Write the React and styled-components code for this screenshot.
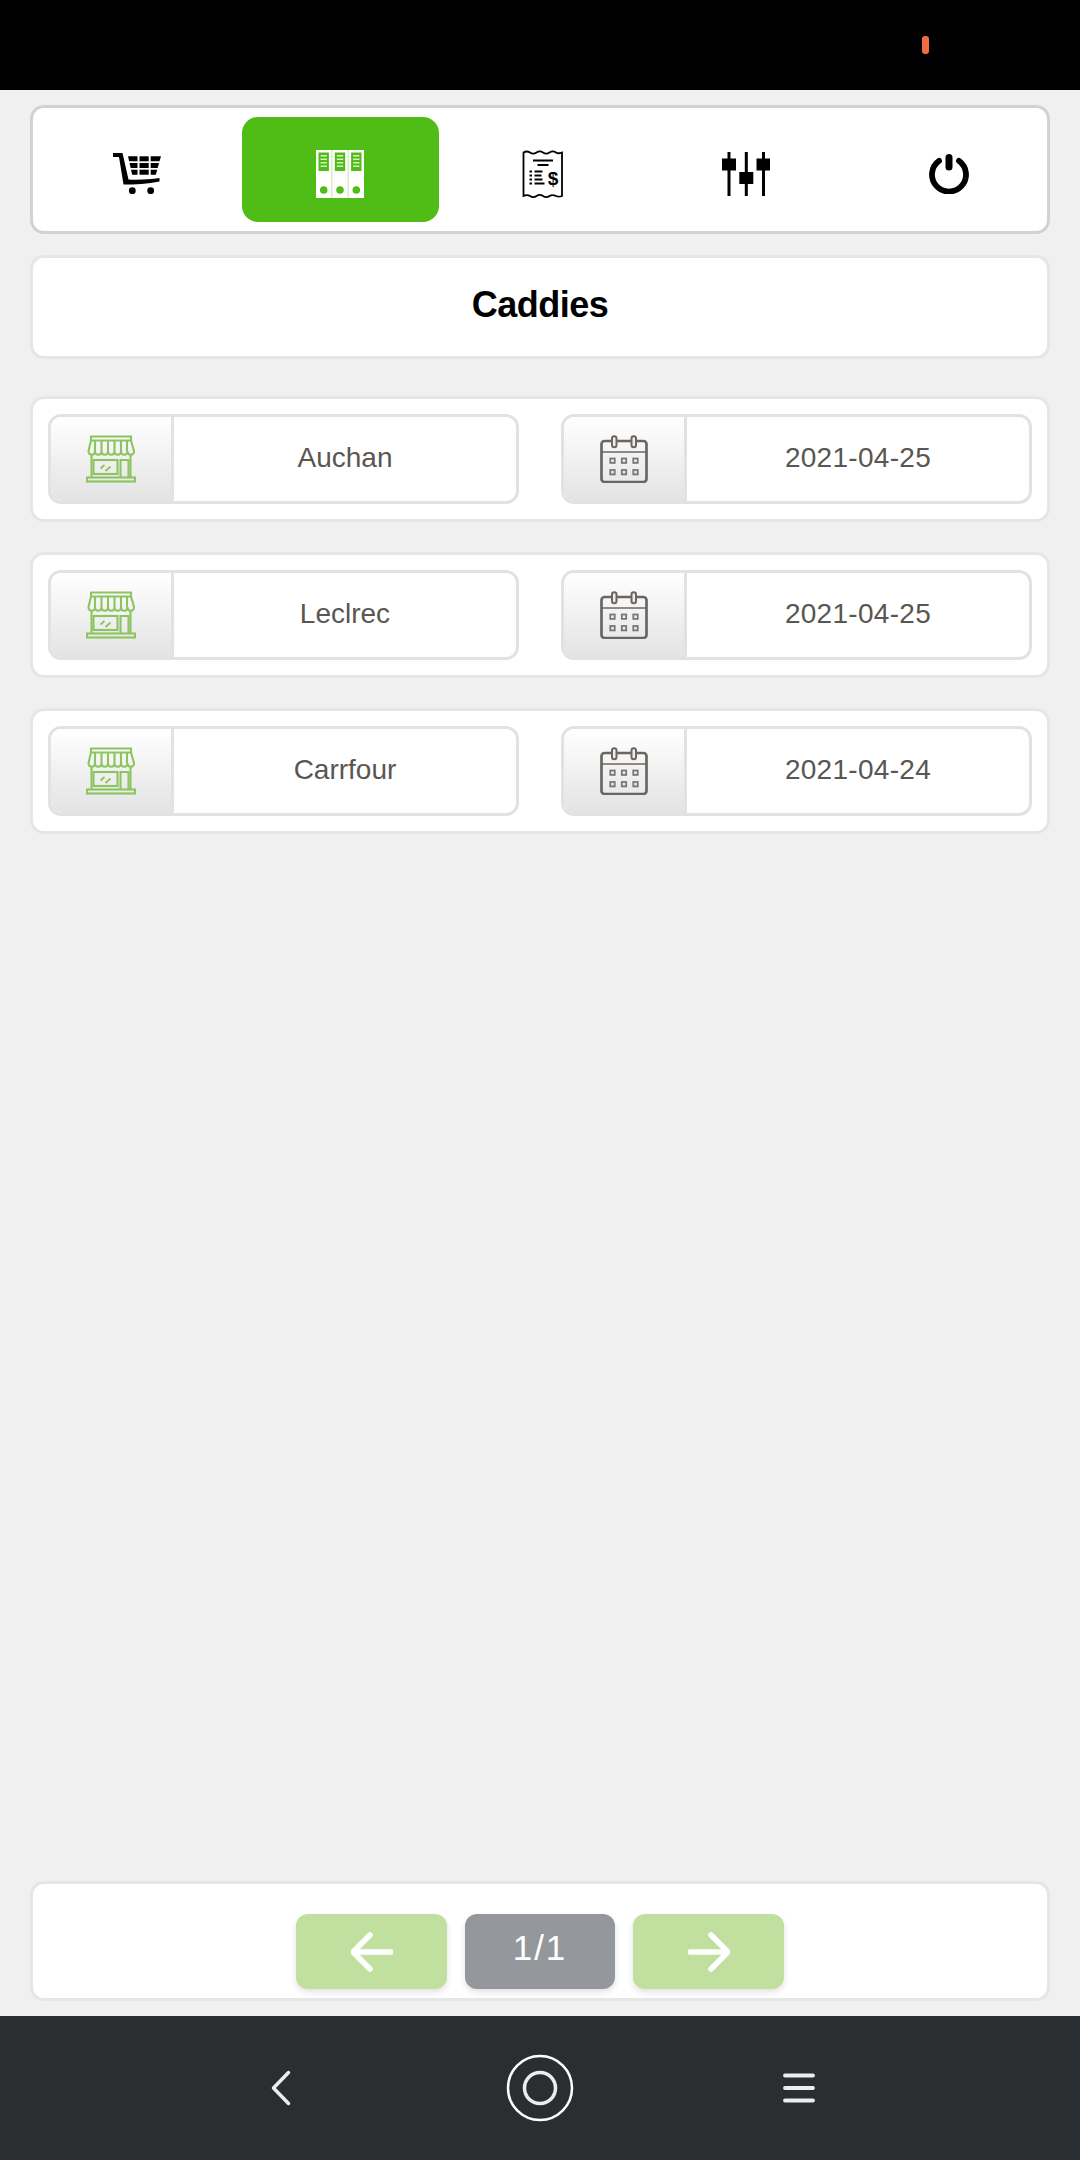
import React from 'react'
import styled, { createGlobalStyle } from 'styled-components'

const GlobalStyle = createGlobalStyle`
  html, body {
    margin: 0;
    padding: 0;
    background: #f0f0f0;
    font-family: "Liberation Sans", Arial, sans-serif;
  }
  * { box-sizing: border-box; }
`

const Page = styled.div`
  width: 1080px;
  height: 2160px;
  display: flex;
  flex-direction: column;
  background: #f0f0f0;
`

const StatusBar = styled.div`
  height: 90px;
  flex-shrink: 0;
  background: #000;
  display: flex;
  align-items: center;
  justify-content: flex-end;
  padding-right: 151px;
`

const RecordDot = styled.div`
  width: 7px;
  height: 18px;
  border-radius: 3px;
  background: #f26b43;
`

const Main = styled.main`
  flex: 1;
  display: flex;
  flex-direction: column;
  padding: 15px 30px;
`

const Card = styled.div`
  background: #fff;
  border: 3px solid #e6e6e6;
  border-radius: 14px;
`

const Toolbar = styled(Card)`
  height: 129px;
  border-color: #d2d2d2;
  padding: 9px 0 9px 3px;
  display: grid;
  grid-template-columns: repeat(5, 202.8px);
`

const ToolButton = styled.button`
  margin: 0 3px;
  padding: 9px 0 0;
  border: none;
  border-radius: 16px;
  background: ${(props) => (props.$active ? '#4fbd15' : 'transparent')};
  display: flex;
  align-items: center;
  justify-content: center;
`

const TitleCard = styled(Card)`
  height: 104px;
  margin-top: 21px;
  padding-bottom: 5px;
  display: flex;
  align-items: center;
  justify-content: center;
`

const Title = styled.h1`
  margin: 0;
  font-size: 36px;
  font-weight: 700;
  letter-spacing: -0.5px;
  color: #000;
`

const List = styled.div`
  display: flex;
  flex-direction: column;
  gap: 30px;
  margin-top: 37px;
`

const Row = styled(Card)`
  padding: 15px;
  display: grid;
  grid-template-columns: 1fr 1fr;
  gap: 42px;
`

const Field = styled.div`
  height: 90px;
  display: flex;
  background: #fff;
  border: 3px solid #e2e2e2;
  border-radius: 13px;
  overflow: hidden;
`

const FieldIcon = styled.div`
  width: 123px;
  flex-shrink: 0;
  display: flex;
  align-items: center;
  justify-content: center;
  border-right: 3px solid #e2e2e2;
  background: linear-gradient(to bottom, #ffffff, #e3e3e3);
`

const FieldValue = styled.div`
  flex: 1;
  display: flex;
  align-items: center;
  justify-content: center;
  padding-bottom: 2px;
  font-size: 28px;
  letter-spacing: ${(props) => (props.$date ? '0.3px' : '0')};
  color: #5a5651;
`

const Spacer = styled.div`
  flex: 1;
`

const Pager = styled(Card)`
  height: 120px;
  padding: 30px 0 9px;
  display: flex;
  justify-content: center;
  gap: 18px;
`

const PagerButton = styled.button`
  width: 151px;
  height: 75px;
  padding: 0;
  border: none;
  border-radius: 12px;
  background: #c1df9e;
  box-shadow: 0 3px 6px rgba(0, 0, 0, 0.12);
  display: flex;
  align-items: center;
  justify-content: center;
`

const PageNumber = styled(PagerButton).attrs({ as: 'div' })`
  width: 150px;
  padding-bottom: 7px;
  background: #94979b;
  color: #fff;
  font-size: 35px;
  letter-spacing: 2px;
`

const SystemNav = styled.nav`
  height: 144px;
  flex-shrink: 0;
  background: #2a2e30;
  display: grid;
  grid-template-columns: repeat(3, 259px);
  justify-content: center;
  justify-items: center;
  align-items: center;
`

const CartIcon = () => (
  <svg width="48" height="42" viewBox="0 0 48 42">
    <path d="M0 0h9.500l6 26.500c9 .5 22 0 31-1.500v3.500c-11 2.500-25 3-36 3L6 4H0z" fill="#000" />
    <g fill="#000">
      <path d="M15 3.300h9.500v5h-8.300z" />
      <path d="M26.500 3.300h9.200v5h-9.200z" />
      <path d="M37.700 3.300H48l-1.500 5h-8.800z" />
      <path d="M16.500 10h8v5h-6.800z" />
      <path d="M26.500 10h9.200v5h-9.200z" />
      <path d="M37.700 10h8.300l-1.300 5h-7z" />
      <path d="M18 16.700h6.500v5h-5.300z" />
      <path d="M26.500 16.700h9.200v5h-9.200z" />
      <path d="M37.700 16.700h6.500l-1.400 5h-5.100z" />
    </g>
    <circle cx="19.300" cy="37.700" r="3.400" fill="#000" />
    <circle cx="37.700" cy="37.700" r="3.400" fill="#000" />
  </svg>
)

const FoldersIcon = () => (
  <svg width="48" height="48" viewBox="0 0 48 48">
    <rect width="48" height="48" fill="#b9e59a" />
    {[0, 16.300, 32.600].map((x) => (
      <g key={x} transform={`translate(${x} 0)`}>
        <rect width="15.400" height="48" fill="#fff" />
        <rect x="2.500" y="2.500" width="10.400" height="18.500" fill="#4fbd15" />
        {[5, 8.500, 12, 15.500].map((y) => (
          <rect key={y} x="4.500" y={y} width="6.400" height="1.500" fill="#d8f0c4" />
        ))}
        <circle cx="7.700" cy="40" r="3.800" fill="#4fbd15" />
      </g>
    ))}
  </svg>
)

const ReceiptIcon = () => (
  <svg width="42" height="48" viewBox="0 0 42 48">
    <path
      d="M1.500 2.500c2.400-1.500 4.200-1.500 6.500 0s4.200 1.500 6.500 0 4.200-1.500 6.500 0 4.200 1.500 6.500 0 4.200-1.500 6.500 0 3.600 1 6 0V46c-2.400 1-3.800 1-6 0s-4.200-1.500-6.500 0-4.200 1.500-6.500 0-4.200-1.500-6.500 0-4.200 1.500-6.500 0-4.200-1-6.500 0z"
      fill="#fff"
      stroke="#000"
      strokeWidth="1.800"
    />
    <path d="M11 10.500h20M15.500 15h11" stroke="#000" strokeWidth="2" />
    <path d="M7.500 21.500h2.500M7.500 25.500h2.500M7.500 29.500h2.500M7.500 33.500h2.500" stroke="#000" strokeWidth="1.800" />
    <path d="M12.500 21.500h8M12.500 25.500h7M12.500 29.500h8M12.500 33.500h10" stroke="#000" strokeWidth="1.800" />
    <text x="31" y="35" fontFamily="Liberation Sans, sans-serif" fontWeight="700" fontSize="19" textAnchor="middle">$</text>
  </svg>
)

const SlidersIcon = () => (
  <svg width="48" height="44" viewBox="0 0 48 44">
    <path d="M7 0v44M24.300 0v44M41.500 0v44" stroke="#000" strokeWidth="3" />
    <rect x="0" y="6.500" width="14" height="12" fill="#000" />
    <rect x="17.300" y="20" width="14" height="12" fill="#000" />
    <rect x="34.500" y="6.500" width="14" height="12" fill="#000" />
  </svg>
)

const PowerIcon = () => (
  <svg width="42" height="40" viewBox="0 0 42 40">
    <path d="M11 6.800a17 17 0 1 0 20 0" fill="none" stroke="#000" strokeWidth="5.800" strokeLinecap="round" />
    <path d="M21 3.500v9.500" stroke="#000" strokeWidth="7" strokeLinecap="round" />
  </svg>
)

const StoreIcon = () => (
  <svg width="50" height="48" viewBox="0 0 50 48" fill="none" stroke="#8cc560" strokeWidth="2.100">
    <path d="M5 1.500h40v4H5z" />
    <path d="M5 5.500 2.500 16c0 5 6.500 5 6.500 0 0 5 6.500 5 6.500 0 0 5 6.500 5 6.500 0 0 5 6.500 5 6.500 0 0 5 6.500 5 6.500 0 0 5 6.500 5 6.500 0 0 5 6.500 5 6.500 0L45 5.500" />
    <path d="M9 5.500 9 16M15.500 5.500V16M22 5.500V16M28.500 5.500V16M35 5.500V16M41 5.500V16" />
    <path d="M5.500 20v22.500M44.500 20v22.500" />
    <rect x="7.500" y="25" width="24" height="14" />
    <path d="M34.500 43V25h8v18" />
    <rect x="1" y="42.500" width="48" height="4" />
    <path d="M14.500 33.500l4-3.500M19.500 36l5-4.500" strokeWidth="1.800" />
  </svg>
)

const CalendarIcon = () => (
  <svg width="48" height="48" viewBox="0 0 48 48" fill="none" stroke="#6b6660">
    <rect x="1.500" y="6" width="45" height="41" rx="3" strokeWidth="2.700" />
    <path d="M1.500 17h45" strokeWidth="1.600" />
    <rect x="12" y="1.200" width="4.500" height="11" rx="2.200" fill="#efefef" strokeWidth="2" />
    <rect x="31.500" y="1.200" width="4.500" height="11" rx="2.200" fill="#efefef" strokeWidth="2" />
    {[23.500, 35].map((y) =>
      [10.300, 21.800, 33.300].map((x) => (
        <rect key={`${x}-${y}`} x={x} y={y} width="4.400" height="4.400" stroke="#777" strokeWidth="1.800" />
      ))
    )}
  </svg>
)

const ArrowIcon = ({ flip }) => (
  <svg width="42" height="40" viewBox="0 0 42 40" style={flip ? { transform: 'scaleX(-1)' } : undefined}>
    <path d="M19 3 2 20l17 17M3 20h37" fill="none" stroke="#fff" strokeWidth="5.500" strokeLinecap="round" strokeLinejoin="round" />
  </svg>
)

const BackIcon = () => (
  <svg width="20" height="36" viewBox="0 0 20 36">
    <path d="M17.500 2.500 2.500 18l15 15.500" fill="none" stroke="#eceeee" strokeWidth="3.500" strokeLinecap="round" strokeLinejoin="round" />
  </svg>
)

const HomeIcon = () => (
  <svg width="68" height="68" viewBox="0 0 68 68" fill="none">
    <circle cx="34" cy="34" r="32" stroke="#fff" strokeWidth="2.500" />
    <circle cx="34" cy="34" r="15.500" stroke="#eceeee" strokeWidth="3.500" />
  </svg>
)

const MenuIcon = () => (
  <svg width="32" height="30" viewBox="0 0 32 30">
    <path d="M2 2.500h28M2 15h28M2 27.500h28" stroke="#eceeee" strokeWidth="3.800" strokeLinecap="round" />
  </svg>
)

const caddies = [
  { store: 'Auchan', date: '2021-04-25' },
  { store: 'Leclrec', date: '2021-04-25' },
  { store: 'Carrfour', date: '2021-04-24' },
]

const App = () => {
  return (
    <Page>
      <GlobalStyle />
      <StatusBar>
        <RecordDot />
      </StatusBar>
      <Main>
        <Toolbar>
          <ToolButton><CartIcon /></ToolButton>
          <ToolButton $active><FoldersIcon /></ToolButton>
          <ToolButton><ReceiptIcon /></ToolButton>
          <ToolButton><SlidersIcon /></ToolButton>
          <ToolButton><PowerIcon /></ToolButton>
        </Toolbar>
        <TitleCard>
          <Title>Caddies</Title>
        </TitleCard>
        <List>
          {caddies.map((caddie) => (
            <Row key={caddie.store}>
              <Field>
                <FieldIcon><StoreIcon /></FieldIcon>
                <FieldValue>{caddie.store}</FieldValue>
              </Field>
              <Field>
                <FieldIcon><CalendarIcon /></FieldIcon>
                <FieldValue $date>{caddie.date}</FieldValue>
              </Field>
            </Row>
          ))}
        </List>
        <Spacer />
        <Pager>
          <PagerButton><ArrowIcon /></PagerButton>
          <PageNumber>1/1</PageNumber>
          <PagerButton><ArrowIcon flip /></PagerButton>
        </Pager>
      </Main>
      <SystemNav>
        <BackIcon />
        <HomeIcon />
        <MenuIcon />
      </SystemNav>
    </Page>
  )
}

export default App
